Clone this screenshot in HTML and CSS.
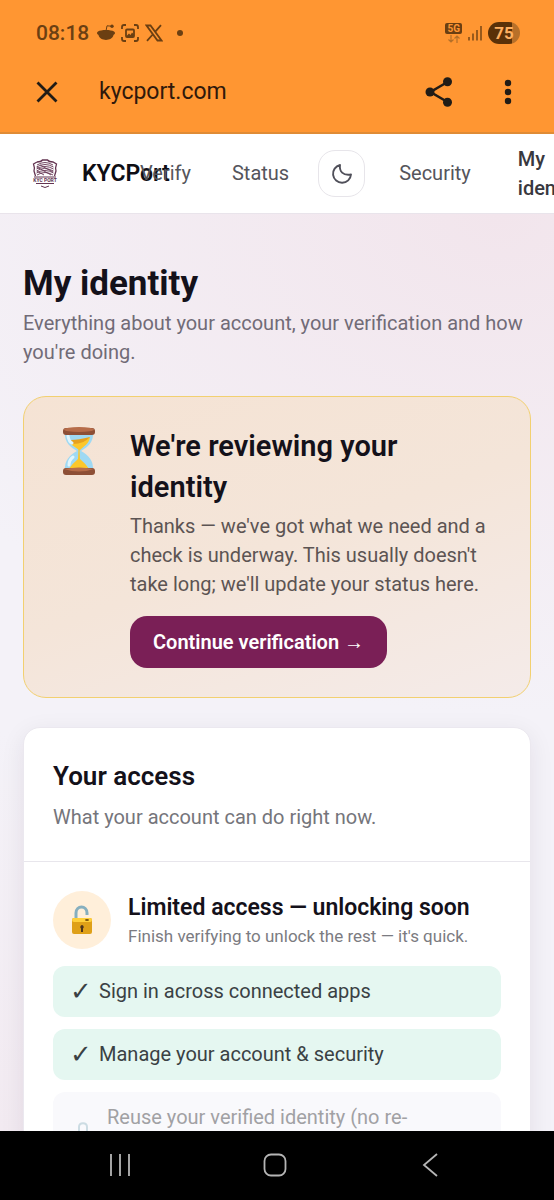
FILE: index.html
```html
<!DOCTYPE html>
<html lang="en">
<head>
  <meta charset="UTF-8">
  <meta name="viewport" content="width=device-width, initial-scale=1.0">
  <title>My identity - KYCPort</title>
  <link rel="stylesheet" href="styles.css">
</head>
<body>

  <!-- Phone status bar and browser bar -->
  <div class="browser">
    <div class="status-bar">
      <span class="clock">08:18</span>
      <div class="status-icons">
        <svg width="18" height="18" viewBox="0 0 18 18">
          <path d="M1 7.500C4 5.500 14 5.500 17 7.500C19 9 17.500 10.500 16.500 11C15 17.500 3 17.500 1.500 11C.5 10.500 -1 9 1 7.500Z" fill="#6b3f12"/>
          <path d="M9 7L10 1.800L14.500 2.200" fill="none" stroke="#6b3f12"/>
          <circle cx="15" cy="2.200" r="1.700" fill="#6b3f12"/>
        </svg>
        <svg width="18" height="18" viewBox="0 0 18 18" fill="none" stroke="#6b3f12" stroke-width="1.800">
          <path d="M1 5V3Q1 1 3 1H5M13 1H15Q17 1 17 3V5M17 13V15Q17 17 15 17H13M5 17H3Q1 17 1 15V13"/>
          <rect x="5" y="5.500" width="8" height="7.500" rx="1"/>
          <path d="M5.500 12L8 9.500L9.500 11L11 8.500L13 10.500V12Z" fill="#6b3f12" stroke="none"/>
        </svg>
        <svg width="18" height="18" viewBox="0 0 18 18" fill="none" stroke="#6b3f12" stroke-width="1.800">
          <path d="M1.500 1.500H5.500L16.500 16.500H12.500ZM16 1.200L10.300 7.700M7.700 10.500L2 16.800"/>
        </svg>
        <svg class="dot" width="18" height="18" viewBox="0 0 18 18"><circle cx="9" cy="9" r="3" fill="#6b3f12"/></svg>
      </div>
      <div class="signal">
        <div class="network">
          <span class="network-type">5G</span>
          <svg width="12" height="8" viewBox="0 0 12 8" fill="none" stroke="#b57029" stroke-width="1.200">
            <path d="M3 0V7M.5 4.500L3 7L5.500 4.500M9 8V1M6.500 3.500L9 1L11.500 3.500"/>
          </svg>
        </div>
        <svg width="16" height="16" viewBox="0 0 16 16" stroke="#804c17" stroke-width="1.600">
          <path d="M2 15.500V12M6 15.500V8.500M10 15.500V5M14 15.500V1"/>
        </svg>
        <span class="battery">75</span>
      </div>
    </div>
    <div class="address-bar">
      <button class="icon-btn" aria-label="Close">
        <svg width="22" height="22" viewBox="0 0 22 22" fill="none" stroke="#211c16" stroke-width="2.800">
          <path d="M1.500 1.500L20.500 20.500M20.500 1.500L1.500 20.500"/>
        </svg>
      </button>
      <span class="url">kycport.com</span>
      <button class="icon-btn share" aria-label="Share">
        <svg width="28" height="30" viewBox="0 0 28 30" fill="#211c16">
          <path d="M22.500 5L5.500 15L22.500 25" fill="none" stroke="#211c16" stroke-width="2.600"/>
          <circle cx="22.500" cy="4.800" r="4.500"/><circle cx="5" cy="15" r="4.500"/><circle cx="22.500" cy="25.200" r="4.500"/>
        </svg>
      </button>
      <button class="icon-btn" aria-label="More">
        <svg width="8" height="26" viewBox="0 0 8 26" fill="#211c16">
          <circle cx="4" cy="4" r="3.200"/><circle cx="4" cy="13" r="3.200"/><circle cx="4" cy="22" r="3.200"/>
        </svg>
      </button>
    </div>
  </div>

  <!-- Site header -->
  <header class="site-header">
    <a class="brand" href="#">
      <svg width="26" height="30" viewBox="0 0 26 30" fill="none" stroke="#633451">
        <path d="M5 3Q9 3 10.500 1H15.500Q17 3 21 3L24.500 5Q23 9 24 12L22.500 17M5 3L1.500 5Q3 9 2 12L3.500 17" stroke-width="1.300"/>
        <path d="M5 6Q13 1 21 6M4.500 8Q13 3 21.500 8M4.500 10Q13 5 21.500 10M4.500 12Q12 7 21.500 12M4.500 14Q13 9 21.500 14M5 16Q13 11 21 16M5 8L19 16M8 6L21 13M5 12L12 16" stroke-width=".9"/>
        <path d="M2 18H24M4 24.500H22M9 27Q13 30 17 27" stroke-width="1"/>
        <text x="13" y="23" class="crest-text">KYC PORT</text>
      </svg>
      <span class="brand-name">KYCPort</span>
    </a>
    <nav class="nav">
      <a href="#">Verify</a>
      <a href="#">Status</a>
      <button class="theme-btn" aria-label="Dark mode">
        <svg width="24" height="24" viewBox="0 0 24 24" fill="none" stroke="#50505a" stroke-width="1.900" stroke-linejoin="round">
          <path d="M21 12.500A9 9 0 1 1 10 3C9 9 13 14 21 12.500Z"/>
        </svg>
      </button>
      <a href="#">Security</a>
      <a class="active" href="#">My identity</a>
    </nav>
  </header>

  <main class="page">
    <h1>My identity</h1>
    <p class="lead">Everything about your account, your verification and how you're doing.</p>

    <!-- Verification status -->
    <section class="review">
      <svg class="hourglass" width="36" height="50" viewBox="0 0 36 50">
        <path d="M4 6H32C33 17 26 21 20 25C27 29 33 34 32 45H4C3 34 9 29 16 25C10 21 3 17 4 6Z" fill="#9fd9f3"/>
        <path d="M8 15Q18 17 29 11C28 18 23 20 18.500 24.500C15 21 10 20 8 15Z" fill="#fcc72b"/>
        <path d="M10 14Q17 14 29 11Q23 18 12 18Z" fill="#e6a11e"/>
        <path d="M17.500 23H18.500L19 33Q25 38 29 44H7Q12 37 17 33Z" fill="#fcc72b"/>
        <path d="M7 10Q8 16 11 17M8 39Q8 34 12 31" fill="none" stroke="#e0f5fd" stroke-width="3" stroke-linecap="round"/>
        <rect x="2" y="2" width="32" height="7" rx="3" fill="#8d4f36"/>
        <ellipse cx="18" cy="3.500" rx="15" ry="2.500" fill="#b66c49"/>
        <rect x="2" y="42" width="32" height="7" rx="3" fill="#8d4f36"/>
        <path d="M3 43Q18 48 33 43Q18 40 3 43Z" fill="#b66c49"/>
      </svg>
      <div class="review-body">
        <h2>We're reviewing your identity</h2>
        <p>Thanks — we've got what we need and a check is underway. This usually doesn't take long; we'll update your status here.</p>
        <button class="primary-btn">Continue verification <span class="arrow">→</span></button>
      </div>
    </section>

    <!-- Access card -->
    <section class="card">
      <div class="card-header">
        <h3>Your access</h3>
        <p>What your account can do right now.</p>
      </div>
      <div class="card-body">
        <div class="access">
          <div class="access-icon">
            <svg width="22" height="30" viewBox="0 0 22 30">
              <path d="M5 15V8C5 0 16 0 16 8V10" fill="none" stroke="#86afbf" stroke-width="3"/>
              <rect x="1" y="13" width="20" height="16" rx="2" fill="#dfa018"/>
              <rect x="1" y="13" width="20" height="4" rx="2" fill="#ffd03b"/>
              <ellipse cx="16" cy="15" rx="2" ry="1" fill="#79500b"/>
              <path d="M11 20A2 2 0 0 1 12 23.500V27H10V23.500A2 2 0 0 1 11 20Z" fill="#4e351c"/>
            </svg>
          </div>
          <div>
            <h4>Limited access — unlocking soon</h4>
            <p>Finish verifying to unlock the rest — it's quick.</p>
          </div>
        </div>
        <ul class="features">
          <li><span class="check">✓</span>Sign in across connected apps</li>
          <li><span class="check">✓</span>Manage your account &amp; security</li>
          <li class="locked">
            <svg width="26" height="20" viewBox="0 0 26 20">
              <path d="M9 12V5C9 0 17 0 17 5V12" fill="none" stroke="#ccdce3" stroke-width="2"/>
              <rect x="4" y="10" width="18" height="10" rx="2" fill="#f3d99a"/>
            </svg>
            <span>Reuse your verified identity (no re-verification)</span>
          </li>
        </ul>
      </div>
    </section>
  </main>

  <!-- Phone navigation -->
  <div class="phone-nav">
    <button class="icon-btn" aria-label="Recent apps">
      <svg width="24" height="24" viewBox="0 0 24 24" stroke="#b5b5b5" stroke-width="1.800"><path d="M3 1V23M12 1V23M21 1V23"/></svg>
    </button>
    <button class="icon-btn" aria-label="Home">
      <svg width="24" height="24" viewBox="0 0 24 24" fill="none" stroke="#b5b5b5" stroke-width="1.800"><rect x="1.500" y="1.500" width="21" height="21" rx="6.500"/></svg>
    </button>
    <button class="icon-btn" aria-label="Back">
      <svg width="24" height="24" viewBox="0 0 24 24" fill="none" stroke="#b5b5b5" stroke-width="1.800"><path d="M19 1L6 12L19 23"/></svg>
    </button>
  </div>

</body>
</html>
```
FILE: styles.css
```css
* {
  box-sizing: border-box;
}
body {
  font-family: Roboto, "Liberation Sans", sans-serif;
  margin: 0;
  height: 100vh;
  display: flex;
  flex-direction: column;
  overflow: hidden;
  color: #14111a;
  background: #000;
}
h1, h2, h3, h4, p, ul {
  margin: 0;
  padding: 0;
}
svg {
  display: block;
  flex-shrink: 0;
}
a {
  color: inherit;
  text-decoration: none;
}
button {
  font-family: inherit;
  border: none;
  cursor: pointer;
}

/* Browser bars */
.browser {
  flex-shrink: 0;
  background: #ff9632;
  border-bottom: 2px solid #e08c36;
}
.status-bar {
  display: flex;
  align-items: center;
  height: 66px;
  padding: 0 34px 0 36px;
}
.clock {
  font-size: 21px;
  font-weight: 500;
  color: #6b3f12;
}
.status-icons {
  display: flex;
  gap: 6px;
  margin-left: 8px;
}
.status-icons .dot {
  margin-left: 2px;
}
.signal {
  display: flex;
  align-items: center;
  gap: 5px;
  margin-left: auto;
}
.network {
  display: flex;
  flex-direction: column;
  align-items: center;
  gap: 1px;
}
.network-type {
  padding: 0 2px;
  border-radius: 2px;
  background: #6b3f12;
  color: #ff9632;
  font-size: 10px;
  line-height: 11px;
  font-weight: 700;
}
.battery {
  width: 32px;
  border-radius: 11px;
  background: linear-gradient(to right, #5a3108 76%, #b87029 76%);
  color: #ffb061;
  font-size: 17px;
  line-height: 22px;
  font-weight: 700;
  text-align: center;
}
.address-bar {
  display: flex;
  align-items: center;
  height: 66px;
  padding: 0 42px 15px 36px;
}
.icon-btn {
  display: flex;
  padding: 0;
  background: none;
}
.url {
  margin-left: 41px;
  font-size: 23px;
  color: #30190b;
}
.share {
  margin-left: auto;
  margin-right: 51px;
}

/* Header */
.site-header {
  display: flex;
  align-items: center;
  flex-shrink: 0;
  height: 80px;
  padding-left: 32px;
  background: #fff;
  border-bottom: 1px solid #e9e4eb;
  overflow: hidden;
}
.brand {
  display: flex;
  align-items: center;
  gap: 24px;
  width: 108px;
  flex-shrink: 0;
}
.crest-text {
  font-size: 5px;
  font-weight: 700;
  text-anchor: middle;
  fill: #633451;
  stroke: none;
}
.brand-name {
  font-size: 23px;
  font-weight: 600;
  white-space: nowrap;
  color: #0e0e14;
}
.nav {
  display: flex;
  align-items: center;
  flex-shrink: 0;
  font-size: 20px;
  line-height: 29px;
  color: #55555c;
}
.nav a {
  margin-right: 41px;
}
.nav a:nth-child(2) {
  margin-right: 29px;
}
.nav .active {
  width: 66px;
  margin-left: 6px;
  margin-right: 0;
  font-weight: 500;
  color: #38383e;
}
.theme-btn {
  display: flex;
  align-items: center;
  justify-content: center;
  width: 47px;
  height: 47px;
  margin-right: 34px;
  border: 1px solid #e7e5ea;
  border-radius: 17px;
  background: #fff;
}

/* Page */
.page {
  flex: 1;
  min-height: 0;
  overflow: hidden;
  padding: 47px 23px 0;
  background:
    radial-gradient(650px 500px at 90% 0, #f2e5ec, transparent),
    radial-gradient(450px 400px at 0 100%, #f2eaf1, transparent),
    #f4f2f8;
}
h1 {
  font-size: 35px;
  line-height: 46px;
  font-weight: 700;
}
.lead {
  margin-top: 2px;
  font-size: 20px;
  line-height: 29px;
  color: #716b77;
}
.review {
  display: flex;
  gap: 33px;
  margin-top: 29px;
  padding: 29px 37px;
  border: 1px solid #f2d070;
  border-radius: 23px;
  background: linear-gradient(160deg, #f5e3d4, #f4e5d9 50%, #f4ebe9);
}
.review h2 {
  font-size: 29px;
  line-height: 41px;
  font-weight: 600;
}
.review p {
  margin-top: 4px;
  font-size: 20px;
  line-height: 29px;
  color: #5c5453;
}
.primary-btn {
  margin-top: 17px;
  padding: 0 23px;
  border-radius: 17px;
  background: #7a1f56;
  color: #fff;
  font-size: 20px;
  line-height: 52px;
  font-weight: 600;
}
.card {
  margin-top: 29px;
  border: 1px solid #ebe8ef;
  border-radius: 17px;
  background: #fff;
  box-shadow: 0 6px 24px rgba(40, 20, 50, 0.08);
}
.card-header {
  padding: 29px;
  border-bottom: 1px solid #e8e6ec;
}
.card-header h3 {
  font-size: 26px;
  line-height: 38px;
  font-weight: 600;
}
.card-header p {
  margin-top: 8px;
  font-size: 20px;
  line-height: 29px;
  color: #75757b;
}
.card-body {
  padding: 29px;
}
.access {
  display: flex;
  align-items: center;
  gap: 17px;
}
.access-icon {
  display: flex;
  align-items: center;
  justify-content: center;
  width: 58px;
  height: 58px;
  border-radius: 50%;
  background: #ffefda;
}
.access h4 {
  font-size: 23px;
  line-height: 32px;
  font-weight: 600;
}
.access p {
  font-size: 17px;
  line-height: 25px;
  color: #7b7b81;
}
.features {
  display: flex;
  flex-direction: column;
  gap: 12px;
  margin-top: 17px;
  list-style: none;
}
.features li {
  display: flex;
  align-items: center;
  gap: 11px;
  padding: 11px 17px;
  border-radius: 12px;
  background: #e5f7f1;
  color: #3a4144;
  font-size: 20px;
  line-height: 29px;
}
.check {
  width: 18px;
  font-family: "DejaVu Sans", sans-serif;
  font-size: 26px;
}
.features .locked {
  background: #f9f9fc;
  color: #a1a1a4;
}

/* Bottom bar */
.phone-nav {
  display: flex;
  align-items: center;
  justify-content: space-between;
  flex-shrink: 0;
  height: 69px;
  padding: 0 112px 2px 108px;
  background: #000;
}
```
